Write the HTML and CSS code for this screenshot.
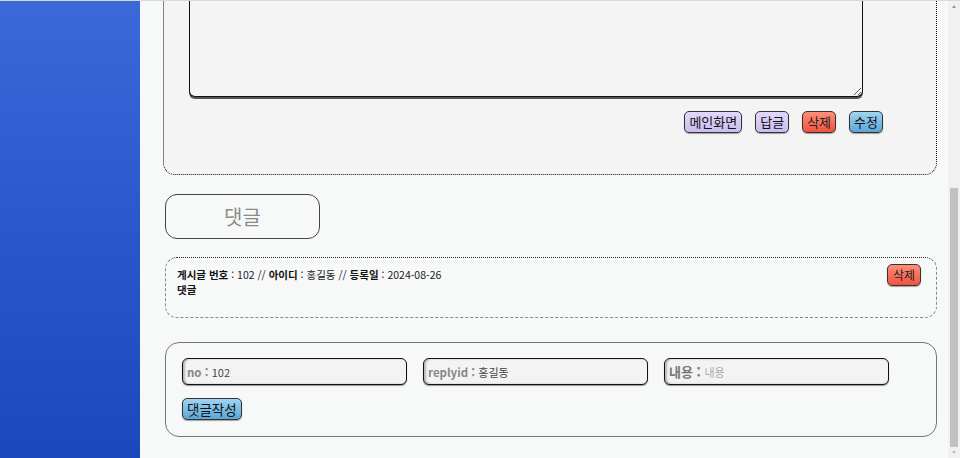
FILE: index.html
```html
<!DOCTYPE html>
<html lang="ko">
<head>
<meta charset="utf-8">
<title>게시글</title>
<link rel="stylesheet" href="styles.css">
</head>
<body>
<div class="page">
  <aside class="sidebar"></aside>
  <main class="main">
    <section class="post">
      <textarea class="post-text"></textarea>
      <div class="post-actions">
        <button class="btn btn-purple">메인화면</button>
        <button class="btn btn-purple">답글</button>
        <button class="btn btn-red">삭제</button>
        <button class="btn btn-blue">수정</button>
      </div>
    </section>

    <div class="reply-title">댓글</div>

    <section class="reply-list">
      <div class="reply-item">
        <div class="reply-body">
          <div class="reply-meta"><b>게시글 번호</b> : 102 // <b>아이디</b> : 홍길동 // <b>등록일</b> : 2024-08-26</div>
          <div class="reply-content"><b>댓글</b></div>
        </div>
        <button class="btn btn-red btn-small">삭제</button>
      </div>
    </section>

    <section class="reply-form">
      <div class="fields">
        <label class="field"><span class="field-label">no : </span><span class="field-value">102</span></label>
        <label class="field"><span class="field-label">replyid : </span><span class="field-value">홍길동</span></label>
        <label class="field"><span class="field-label field-label-big">내용 : </span><span class="field-placeholder">내용</span></label>
      </div>
      <button class="btn btn-blue btn-submit">댓글작성</button>
    </section>
  </main>
  <div class="scrollbar">
    <span class="arrow arrow-up"></span>
    <div class="track"><div class="thumb"></div></div>
    <span class="arrow arrow-down"></span>
  </div>
</div>
</body>
</html>
```

FILE: styles.css
```css
* { box-sizing: border-box; }
html, body { margin: 0; padding: 0; height: 100%; }
body {
  font-family: "Noto Sans CJK KR", "Noto Sans", sans-serif;
  background: #f7f8f8;
  overflow: hidden;
}
.page {
  display: flex;
  height: 458px;
  width: 960px;
  border-top: 1px solid #d9dadc;
}
.sidebar {
  width: 140px;
  flex: none;
  background: linear-gradient(180deg, #3b69d8 0%, #2a57cc 50%, #1d48bd 100%);
}
.main {
  flex: 1;
  background: #f7f8f8;
  padding: 0 11px 0 23px;
  overflow: hidden;
}
.post {
  margin-top: -40px;
  border: 1.5px dotted #111;
  border-top: none;
  border-radius: 0 0 12px 12px;
  background: #f4f4f4;
  padding: 0 53px 38px 25px;
  height: 214px;
}
.post-text {
  display: block;
  width: 674px;
  height: 136px;
  border: 1px solid #111;
  border-radius: 0 0 6px 6px;
  border-top: none;
  background: #f4f4f4;
  box-shadow: 0 2px 0 #555;
  resize: both;
}
.post-actions {
  display: flex;
  justify-content: flex-end;
  gap: 13px;
  margin-top: 14px;
}
.btn {
  font-family: "Noto Sans CJK KR", sans-serif;
  font-size: 13px;
  line-height: 18px;
  color: #111;
  padding: 1px 4px;
  height: 22px;
  border: 1px solid #333;
  border-radius: 5px;
  box-shadow: 0 1px 1px rgba(0,0,0,0.35);
  cursor: pointer;
}
.btn-purple { background: linear-gradient(180deg, #e2d8fa 0%, #cbbcf0 100%); }
.btn-red { background: linear-gradient(180deg, #ff8f78 0%, #f0533f 100%); color: #222; }
.btn-blue { background: linear-gradient(180deg, #9fd4f2 0%, #5aa6d6 100%); }
.reply-title {
  width: 155px;
  height: 45px;
  margin: 19px 0 0 2px;
  border: 1px solid #444;
  border-radius: 12px;
  display: flex;
  align-items: center;
  justify-content: center;
  font-size: 20px;
  color: #8a8a8a;
  background: #f7f8f8;
}
.reply-list { margin: 18px 0 0 2px; }
.reply-item {
  height: 61px;
  border: 1px dashed #888;
  border-top: 1px dotted #222;
  border-radius: 12px;
  display: flex;
  justify-content: space-between;
  align-items: flex-start;
  padding: 6px 15px 0 11px;
}
.reply-body {
  padding-top: 3px;
  font-size: 10.5px;
  line-height: 15px;
  color: #222;
}
.reply-body b { font-weight: 700; color: #111; }
.btn-small { height: 22px; font-size: 12px; padding: 0 5px; }
.reply-form {
  margin: 24px 0 0 2px;
  border: 1px solid #777;
  border-radius: 14px;
  height: 95px;
  padding: 15px 16px 0 16px;
}
.fields { display: flex; gap: 16px; }
.field {
  width: 225px;
  height: 27px;
  border: 1.5px solid #111;
  border-radius: 6px;
  background: #f3f3f3;
  box-shadow: 0 1px 1px rgba(0,0,0,0.4), inset 2px 0 2px rgba(0,0,0,0.25);
  display: flex;
  align-items: center;
  padding-left: 4px;
  font-size: 11px;
}
.field-label { color: #888; font-weight: 700; font-size: 11.5px; white-space: pre; }
.field-label-big { font-size: 13px; color: #777; }
.field-value { color: #444; }
.field-placeholder { color: #aaa; }
.btn-submit { margin-top: 13px; height: 22px; padding: 0 4px; font-size: 13.5px; }
.scrollbar {
  width: 12px;
  flex: none;
  background: #f1f1f1;
  display: flex;
  flex-direction: column;
  align-items: center;
}
.arrow {
  width: 0; height: 0;
  border-left: 2.5px solid transparent;
  border-right: 2.5px solid transparent;
  margin: 4px 0;
}
.arrow-up { border-bottom: 3px solid #999; }
.arrow-down { border-top: 3px solid #bbb; }
.track { flex: 1; width: 100%; padding: 0 2px; display: flex; flex-direction: column; }
.thumb {
  margin-top: 176px;
  flex: 1;
  background: #c1c1c1;
  margin-bottom: 0;
}
```
